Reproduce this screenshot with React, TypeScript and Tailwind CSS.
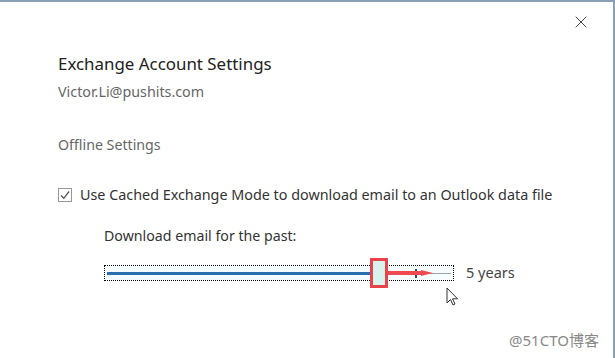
import { X } from "lucide-react";

const font = { fontFamily: '"Noto Sans", "Noto Sans CJK SC", sans-serif' };

function Slider() {
  return (
    <div className="flex items-center gap-3">
      <div className="relative h-[16px] w-[350px] border border-dotted border-black bg-[#f7fdff]">
        <div className="absolute left-[2px] top-[6px] h-[3px] w-[268px] bg-[#2a6fad]" />
        <div className="absolute left-[270px] top-[7px] h-[1px] w-[76px] bg-[#a0a0a0]" />
        <div className="absolute left-[310px] top-[3px] h-[9px] w-[2px] bg-[#2a4f78]" />
        <div className="absolute left-[282px] top-[5px] h-[4px] w-[36px] bg-[#ef4a50]" />
        <svg className="absolute left-[316px] top-[1px]" width="14" height="12" viewBox="0 0 14 12">
          <path d="M0 3 L12 6 L0 9 Z" fill="#ef4a50" />
        </svg>
        <div className="absolute left-[265px] top-[-8px] h-[30px] w-[18px] border-[3px] border-[#e8424a] bg-[#d8f2ee]" />
      </div>
      <span className="text-[14.5px] text-[#444]">5 years</span>
    </div>
  );
}

export default function App() {
  return (
    <div
      className="relative h-[358px] w-[615px] overflow-hidden border-t-2 border-r-2 border-[#8a9fb3] bg-white text-[#333]"
      style={font}
    >
      <button className="absolute right-[22px] top-[10px] text-[#444]">
        <X size={20} strokeWidth={1.2} />
      </button>
      <div className="flex flex-col pl-[58px] pt-[50px]">
        <h1 className="text-[16.9px] leading-[24px] text-[#222]">Exchange Account Settings</h1>
        <p className="mt-[6px] text-[14.3px] leading-[20px] text-[#666]">Victor.Li@pushits.com</p>
        <p className="mt-[33px] text-[14.2px] leading-[20px] text-[#666]">Offline Settings</p>
        <label className="mt-[30px] flex items-center gap-[8px]">
          <span className="flex h-[14px] w-[14px] items-center justify-center border border-[#999] bg-white">
            <svg width="10" height="10" viewBox="0 0 10 10">
              <path d="M1 5.5 L3.8 8.3 L9 1.5" fill="none" stroke="#555" strokeWidth="1.3" />
            </svg>
          </span>
          <span className="text-[14.35px] leading-[20px] text-[#333]">
            Use Cached Exchange Mode to download email to an Outlook data file
          </span>
        </label>
        <div className="mt-[21px] pl-[46px]">
          <p className="text-[14.2px] leading-[20px] text-[#333]">Download email for the past:</p>
          <div className="mt-[16px]">
            <Slider />
          </div>
        </div>
      </div>
      <svg className="absolute left-[446px] top-[285px]" width="14" height="20" viewBox="0 0 14 20">
        <path d="M1 1 L1 16 L4.5 12.5 L7 18 L9 17 L6.5 11.8 L11.5 11.8 Z" fill="white" stroke="#333" strokeWidth="1" />
      </svg>
      <span className="absolute left-[509px] top-[327px] text-[15px] text-[#888]">@51CTO博客</span>
    </div>
  );
}
